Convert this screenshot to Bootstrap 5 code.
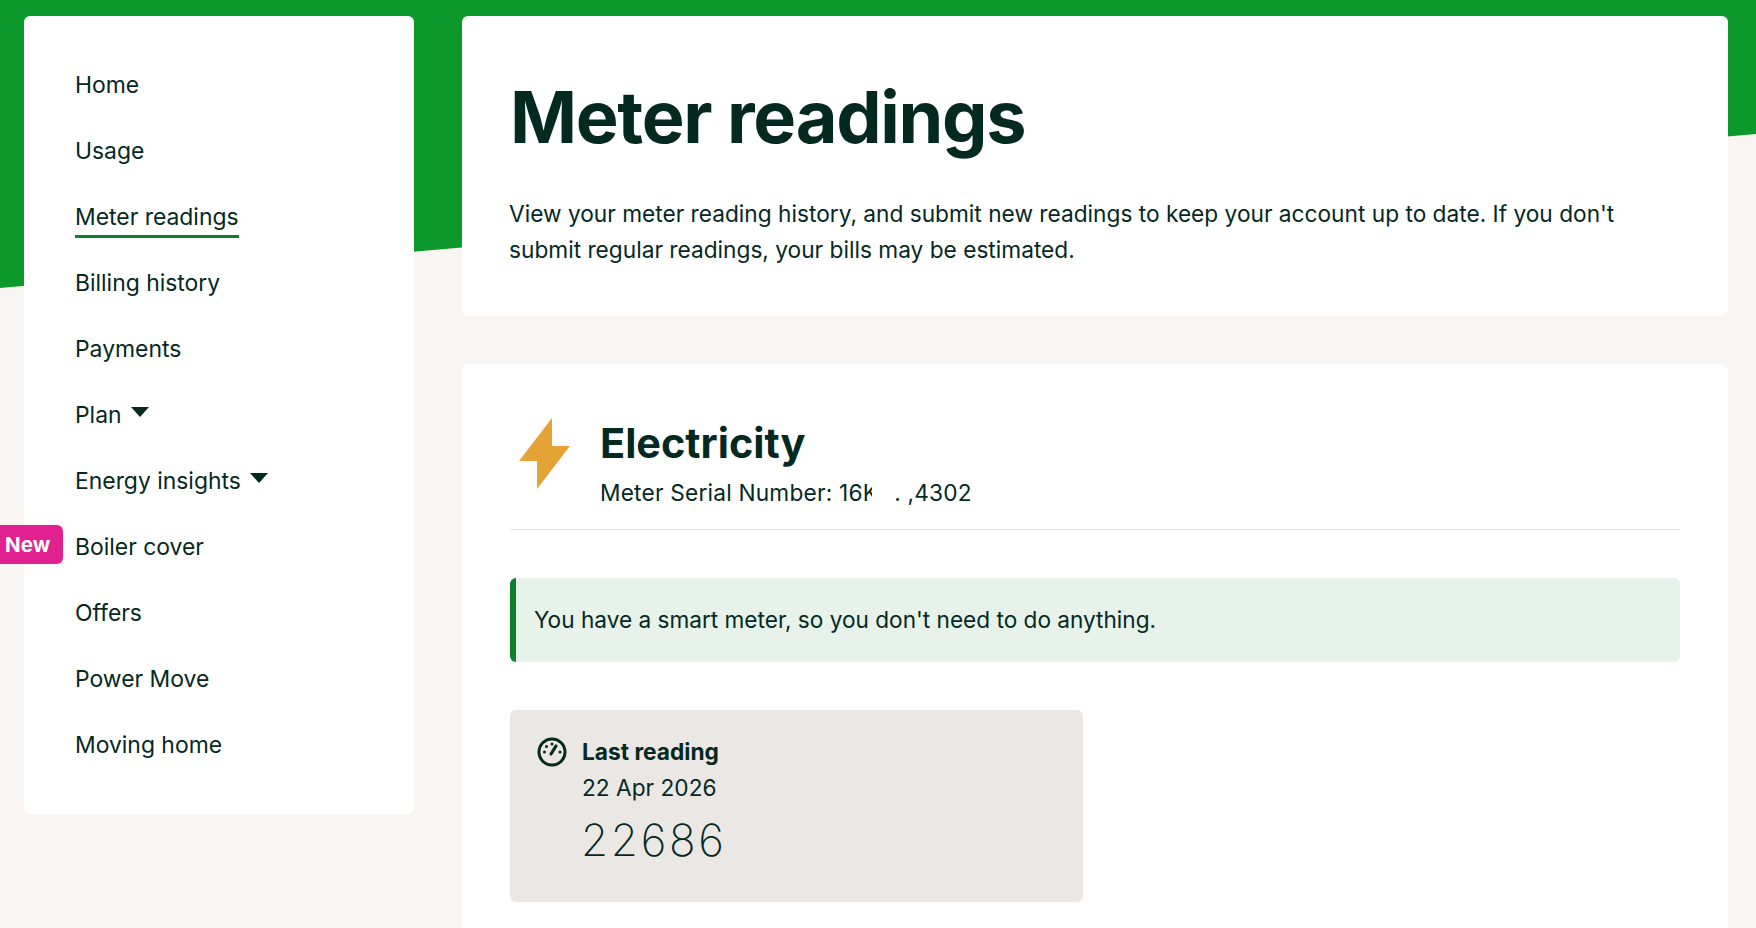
<!doctype html>
<html lang="en"><head><meta charset="utf-8"><title>Meter readings</title>
<link href="https://cdn.jsdelivr.net/npm/bootstrap@5.3.0/dist/css/bootstrap.min.css" rel="stylesheet">
<style>
html,body{height:100%}
body{background:#f9f5f2;color:#04291f;font-family:"Inter","Noto Sans",sans-serif;font-size:22.7px;line-height:36px;overflow:hidden}
.green-band{position:absolute;inset:0 0 auto 0;height:288px;background:#0c982b;clip-path:polygon(0 0,100% 0,100% 134px,0 288px)}
.page-wrap{position:relative;height:928px;padding:16px 28px 0 24px;gap:48px}
.side-panel{width:390px;height:798px;flex:none;background:#fff;border-radius:6px;padding:36px 0;position:relative}
.side-link{display:flex;align-items:center;height:66px;padding:0 0 0 51px;color:#04291f;text-decoration:none;line-height:28px;font-size:22.9px}
.side-link.current span{border-bottom:3px solid #0d802f;padding-bottom:4px;margin-top:8px;line-height:27px}
.caret-mark{width:0;height:0;border-left:9.5px solid transparent;border-right:9.5px solid transparent;border-top:10px solid #04291f;margin:-6px 0 0 9px}
.new-tag{position:absolute;left:-24px;top:11px;width:63px;height:39px;background:#e0218f;color:#fff;border-radius:0 6px 6px 0;font-size:20.6px;font-weight:700;line-height:40px;padding-left:5px}
.tile{background:#fff;border:0;border-radius:6px;padding:48px}
.head-tile{height:300px;padding-top:54px}
.head-tile h1{font-size:72px;font-weight:700;letter-spacing:-1.3px;line-height:94px;margin:0 0 32px;color:#04291f}
.head-tile p{margin:0 0 0 -1px}
.elec-tile{height:600px;padding-top:50px}
.elec-head{height:116px;border-bottom:1px solid #e6e6e6}
.bolt{width:51px;height:71px;margin:4px 30px 0 9px;flex:none}
.elec-head h2{font-size:41.4px;font-weight:700;line-height:48px;margin:5px 0 0;color:#04291f;letter-spacing:0}
.serial{line-height:32px;margin-top:10px;letter-spacing:.2px}
.k-cut{position:relative;display:inline-block}
.k-cut::after{content:"";position:absolute;left:9px;top:0;width:24px;height:100%;background:#fff}
.gap-cut{display:inline-block;width:16px}
.smart-note{background:#e6f2ea;border-left:6px solid #0d802f;border-radius:6px;height:84px;margin:48px 0;padding:0 18px;display:flex;align-items:center;font-size:22.62px}
.read-box{background:#ebe7e4;border-radius:6px;height:192px;padding:24px 27px}
.gauge{width:30px;height:30px;flex:none;margin:3px 15px 0 0}
.read-title{font-weight:700;line-height:36px}
.read-val{font-size:44px;font-weight:200;letter-spacing:2.7px;line-height:56px;margin:6px 0 0 -1px}
</style></head>
<body>
<div class="green-band"></div>
<div class="page-wrap d-flex align-items-start">
  <nav class="side-panel">
    <ul class="nav flex-column">
      <li class="nav-item"><a class="side-link" href="#"><span>Home</span></a></li>
      <li class="nav-item"><a class="side-link" href="#"><span>Usage</span></a></li>
      <li class="nav-item"><a class="side-link current" href="#"><span>Meter readings</span></a></li>
      <li class="nav-item"><a class="side-link" href="#"><span>Billing history</span></a></li>
      <li class="nav-item"><a class="side-link" href="#"><span>Payments</span></a></li>
      <li class="nav-item"><a class="side-link" href="#"><span>Plan</span><i class="caret-mark"></i></a></li>
      <li class="nav-item"><a class="side-link" href="#"><span>Energy insights</span><i class="caret-mark"></i></a></li>
      <li class="nav-item position-relative"><b class="new-tag">New</b><a class="side-link" href="#"><span>Boiler cover</span></a></li>
      <li class="nav-item"><a class="side-link" href="#"><span>Offers</span></a></li>
      <li class="nav-item"><a class="side-link" href="#"><span>Power Move</span></a></li>
      <li class="nav-item"><a class="side-link" href="#"><span>Moving home</span></a></li>
    </ul>
  </nav>
  <main class="flex-grow-1 d-flex flex-column" style="gap:48px">
    <section class="card tile head-tile">
      <h1>Meter readings</h1>
      <p>View your meter reading history, and submit new readings to keep your account up to date. If you don't submit regular readings, your bills may be estimated.</p>
    </section>
    <section class="card tile elec-tile">
      <div class="elec-head d-flex align-items-start">
        <svg class="bolt" viewBox="0 0 51 71"><path fill="#e5a335" d="M33 0V28H51L18 71V43H0Z"/></svg>
        <div>
          <h2>Electricity</h2>
          <div class="serial">Meter Serial Number: 16<span class="k-cut">K</span><span class="gap-cut"></span>. ,4302</div>
        </div>
      </div>
      <div class="smart-note">You have a smart meter, so you don't need to do anything.</div>
      <div class="row g-4">
        <div class="col-6">
          <div class="read-box d-flex align-items-start">
            <svg class="gauge" viewBox="0 0 30 30"><circle cx="15" cy="15" r="13" fill="none" stroke="#04291f" stroke-width="3"/><path d="M14 17 19 9" stroke="#04291f" stroke-width="3.2" stroke-linecap="round"/><g fill="#04291f"><circle cx="7.5" cy="15" r="1.5"/><circle cx="9.5" cy="9.5" r="1.5"/><circle cx="15" cy="7" r="1.5"/><circle cx="23" cy="15" r="1.5"/></g></svg>
            <div>
              <div class="read-title">Last reading</div>
              <div>22 Apr 2026</div>
              <div class="read-val">22686</div>
            </div>
          </div>
        </div>
      </div>
    </section>
  </main>
</div>
</body></html>
